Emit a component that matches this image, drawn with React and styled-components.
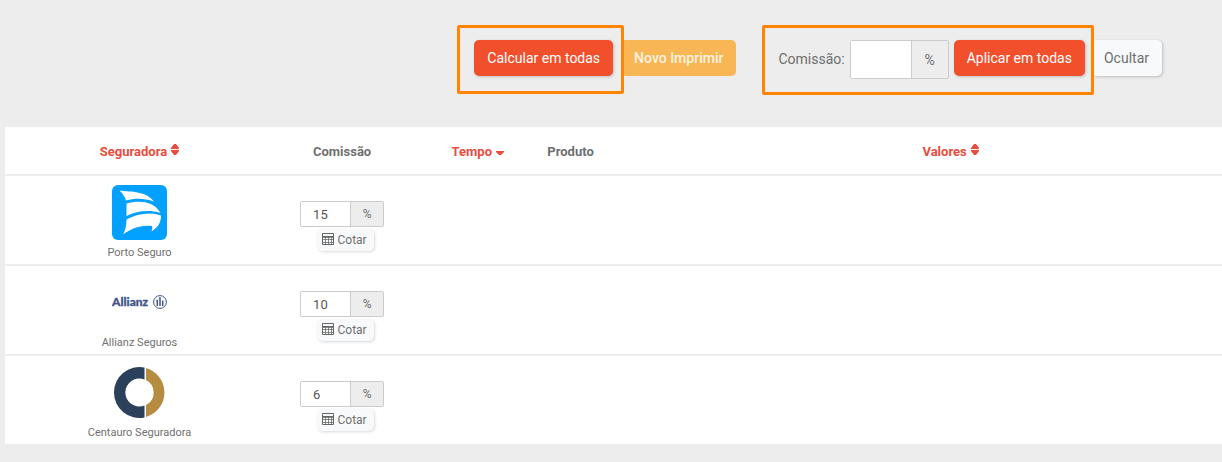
import React, { useState } from 'react';
import styled, { createGlobalStyle } from 'styled-components';

const GlobalStyle = createGlobalStyle`
  * {
    box-sizing: border-box;
  }

  body {
    margin: 0;
    background: #ededed;
    color: #6f6f6f;
    font-family: Roboto, 'Liberation Sans', sans-serif;
    font-size: 14px;
  }

  button,
  input {
    font-family: inherit;
  }
`;

const Page = styled.main`
  padding: 25px 0 19px 5px;
`;

const Toolbar = styled.div`
  display: flex;
  justify-content: flex-end;
  align-items: flex-start;
  padding-right: 60px;
  min-height: 102px;
`;

const Highlight = styled.div`
  position: relative;
  z-index: 1;
  display: flex;
  align-items: flex-start;
  gap: 5px;
  height: ${({ $height }) => $height};
  margin-right: -3px;
  padding: 12px ${({ $right }) => $right} 0 ${({ $left }) => $left};
  border: 3px solid #ff8400;
  border-radius: 2px;
`;

const Button = styled.button`
  height: 36px;
  padding: 0 13px;
  border: 0;
  border-radius: 5px;
  background: #f24f2c;
  color: #fff;
  font-size: 14px;
  line-height: 36px;
  white-space: nowrap;
  box-shadow: 1px 1px 3px rgba(0, 0, 0, 0.2);
  cursor: pointer;
`;

const PrintButton = styled(Button)`
  margin: 15px 26px 0 0;
  background: #f9b654;
  color: #fdf3e2;
  font-weight: 500;
  box-shadow: none;
`;

const HideButton = styled(Button)`
  margin-top: 15px;
  background: #f8f9fb;
  color: #6f6f6f;
`;

const CommissionLabel = styled.label`
  font-size: 14px;
  line-height: 38px;
`;

const InputGroup = styled.div`
  display: flex;
  width: ${({ $large }) => ($large ? '99px' : '84px')};
  height: ${({ $large }) => ($large ? '39px' : '26px')};
  border: 1px solid #ccc;
  border-radius: 2px;
  background: #ededed;
  overflow: hidden;
  font-size: ${({ $large }) => ($large ? '14px' : '13px')};
`;

const Input = styled.input`
  flex: 1;
  min-width: 0;
  padding: 0 12px;
  border: 0;
  border-right: 1px solid #ccc;
  background: #fff;
  color: #555;
  font-size: inherit;
  outline: 0;
`;

const Addon = styled.span`
  display: flex;
  align-items: center;
  justify-content: center;
  width: ${({ $large }) => ($large ? '36px' : '32px')};
  font-size: ${({ $large }) => ($large ? '14px' : '12px')};
`;

const Table = styled.table`
  width: 100%;
  table-layout: fixed;
  border-collapse: collapse;
  background: #fff;
`;

const HeadCell = styled.th`
  width: ${({ $width }) => $width};
  height: 48px;
  padding: 2px 2px 0;
  border-bottom: 2px solid #ededed;
  color: #6f6f6f;
  font-size: 13px;
  font-weight: 700;
  text-align: ${({ $align }) => $align || 'center'};
`;

const SortButton = styled.button`
  display: inline-flex;
  align-items: center;
  gap: 4px;
  padding: 0;
  border: 0;
  background: none;
  color: #e74c3c;
  font-size: 13px;
  font-weight: 700;
  cursor: pointer;
`;

const Row = styled.tr`
  & + & td {
    border-top: 2px solid #ededed;
  }
`;

const Cell = styled.td`
  padding: ${({ $top }) => $top || '9px'} 0 3px;
  vertical-align: top;
`;

const Insurer = styled.div`
  display: flex;
  flex-direction: column;
  align-items: center;
  gap: 5px;
  font-size: 11px;
  line-height: 16px;

  svg {
    display: block;
  }
`;

const Commission = styled.div`
  display: flex;
  flex-direction: column;
  align-items: center;
  gap: 2px;
`;

const QuoteButton = styled.button`
  display: flex;
  align-items: center;
  gap: 4px;
  height: 22px;
  margin-left: 6px;
  padding: 0 7px 0 5px;
  border: 0;
  border-radius: 5px;
  background: #f8f9fb;
  color: #6f6f6f;
  font-size: 12px;
  box-shadow: 1px 1px 3px rgba(0, 0, 0, 0.15);
  cursor: pointer;
`;

const SortIcon = () => (
  <svg width="8" height="15" viewBox="0 0 8 15" fill="currentColor" aria-hidden="true">
    <path d="M3 0h2l3 4v1H0V4zM0 6h8v1l-3 4H3L0 7z" />
  </svg>
);

const SortDownIcon = () => (
  <svg width="8" height="6" viewBox="0 0 8 6" fill="currentColor" aria-hidden="true">
    <path d="M0 2h8v1L5 6H3L0 3z" />
  </svg>
);

const CalculatorIcon = () => (
  <svg width="12" height="15" viewBox="0 0 12 15" fill="none" stroke="#666" aria-hidden="true">
    <path d="M.5.5h11v11H.5zM.5 3.500h11" />
    <path d="M.5 4.500h11M.5 6.500h11M.5 9.500h11M3.500 4v8M6.500 4v8M9.500 4v8" strokeOpacity=".75" />
  </svg>
);

const PortoLogo = () => (
  <svg width="55" height="55" viewBox="0 0 55 55" role="img" aria-label="Porto Seguro">
    <rect width="55" height="55" rx="6" fill="#03a1ff" />
    <g fill="#fff">
      <path d="M7.500 5.500C20 7 34 6 42 16.500C32 13 23 13.200 14 15.500C13 11.500 10.500 8.500 7.500 5.500Z" />
      <path d="M14.500 18.500C27 15 42 16 48.500 28C37 24.500 25 26 14.500 31Z" />
      <path d="M14.500 34.500C25 28.500 39 26.500 49 30.500C49 38 46 42 39.500 46.500C40.500 44 40.500 42.500 40 41C29 39.500 18 44 11 49.500C13.500 45 14.500 40 14.500 34.500Z" />
    </g>
  </svg>
);

const AllianzLogo = () => (
  <svg width="55" height="55" viewBox="0 0 55 55" role="img" aria-label="Allianz">
    <text x="0" y="31" fill="#43558a" stroke="#43558a" strokeWidth=".3" fontFamily="Lato, sans-serif" fontSize="12" fontWeight="900">
      Allianz
    </text>
    <circle cx="48" cy="27" r="6.400" fill="none" stroke="#43558a" />
    <path d="M45.300 31v-5.500h-1M48 31v-8h-1M50.700 31v-5.500" fill="none" stroke="#43558a" strokeWidth="1.500" />
  </svg>
);

const CentauroLogo = () => (
  <svg width="55" height="55" viewBox="0 0 55 55" role="img" aria-label="Centauro">
    <path d="M32.500 2.500A25.500 25.500 0 1 0 32.500 52.500V40.500A14 14 0 1 1 32.500 14.500Z" fill="#2b405b" />
    <path d="M34 3A25.500 25.500 0 0 1 34 52V40A14 14 0 0 0 34 15Z" fill="#b58c40" />
  </svg>
);

const insurers = [
  { id: 'porto', name: 'Porto Seguro', commission: '15', Logo: PortoLogo },
  { id: 'allianz', name: 'Allianz Seguros', commission: '10', Logo: AllianzLogo },
  { id: 'centauro', name: 'Centauro Seguradora', commission: '6', Logo: CentauroLogo },
];

const InsurerRow = ({ name, commission, Logo }) => {
  const [value, setValue] = useState(commission);

  return (
    <Row>
      <Cell>
        <Insurer>
          <Logo />
          <span>{name}</span>
        </Insurer>
      </Cell>
      <Cell $top="25px">
        <Commission>
          <InputGroup>
            <Input
              aria-label={`Comissão ${name}`}
              value={value}
              onChange={(e) => setValue(e.target.value)}
            />
            <Addon>%</Addon>
          </InputGroup>
          <QuoteButton type="button">
            <CalculatorIcon />
            Cotar
          </QuoteButton>
        </Commission>
      </Cell>
      <Cell />
      <Cell />
      <Cell />
    </Row>
  );
};

const App = () => (
  <>
    <GlobalStyle />
    <Page>
      <Toolbar>
        <Highlight $height="69px" $left="14px" $right="8px">
          <Button type="button">Calcular em todas</Button>
        </Highlight>
        <PrintButton type="button">Novo Imprimir</PrintButton>
        <Highlight $height="70px" $left="13px" $right="6px">
          <CommissionLabel htmlFor="commission">Comissão:</CommissionLabel>
          <InputGroup $large>
            <Input id="commission" />
            <Addon $large>%</Addon>
          </InputGroup>
          <Button type="button">Aplicar em todas</Button>
        </Highlight>
        <HideButton type="button">Ocultar</HideButton>
      </Toolbar>

      <Table>
        <thead>
          <tr>
            <HeadCell $width="22.1%">
              <SortButton type="button">
                Seguradora
                <SortIcon />
              </SortButton>
            </HeadCell>
            <HeadCell $width="11.2%">Comissão</HeadCell>
            <HeadCell $width="11.1%">
              <SortButton type="button">
                Tempo
                <SortDownIcon />
              </SortButton>
            </HeadCell>
            <HeadCell $width="11%" $align="left">Produto</HeadCell>
            <HeadCell>
              <SortButton type="button">
                Valores
                <SortIcon />
              </SortButton>
            </HeadCell>
          </tr>
        </thead>
        <tbody>
          {insurers.map((insurer) => (
            <InsurerRow key={insurer.id} {...insurer} />
          ))}
        </tbody>
      </Table>
    </Page>
  </>
);

export default App;
